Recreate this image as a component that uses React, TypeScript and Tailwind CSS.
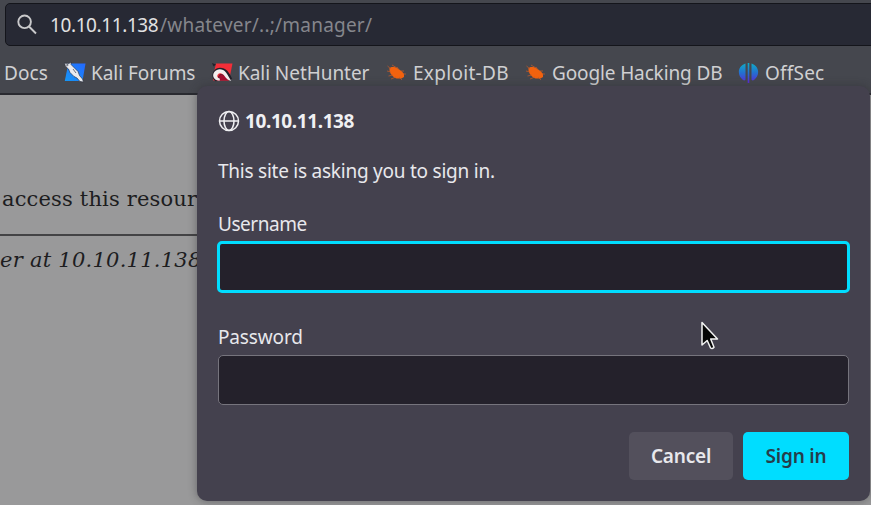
import type { ReactNode } from "react";

function KaliForumsIcon() {
  return (
    <svg width="22" height="22" viewBox="0 0 22 22" className="block">
      <defs>
        <linearGradient id="forums" x1="0" y1="1" x2="1" y2="0">
          <stop offset="0" stopColor="#1597f5" />
          <stop offset="1" stopColor="#2468ff" />
        </linearGradient>
      </defs>
      <path d="M4.500 1.500H21.500L18.500 19H.8L3 8Z" fill="url(#forums)" />
      <path d="M.5 1l4.500.5 2-1.500 0 2.500 3.500 3.500 3.500 3.500 1.500 4 3 3.500 1 3-3.500-.5-3-3.500-3-1.500L8 12.500 6 10.500 4.500 7 1.500 4.500Z" fill="#e9ebf0" stroke="#252a38" strokeWidth=".6" />
      <path d="M1.500 1.500l3 1.500M2 4l2-.5M9 7l3 4" stroke="#3a3d4a" strokeWidth=".7" />
    </svg>
  );
}

function NetHunterIcon() {
  return (
    <svg width="22" height="22" viewBox="0 0 22 22" className="block">
      <path d="M5 1.500H21.500L18 18.500H2L3 10Z" fill="#f42e38" />
      <path d="M5 18.500L9 12l5 1 3.500 5.500Z" fill="#a70e30" />
      <path d="M1 1l4 1.500-2.500 2Z" fill="#23202a" />
      <path d="M6 18C1.500 15 2.500 8 9 7.500c5 0 7.500 3.500 10.500 10" fill="none" stroke="#23202a" strokeWidth="3.600" />
      <path d="M5.500 17.500C1.500 14.500 3.500 8.500 9 8.200c5-.2 7 4.300 10.500 9.300-3.500-1.500-5.500-5-9-5-3 .2-4 2.500-1.500 4.500" fill="none" stroke="#23202a" strokeWidth=".5" />
      <path d="M8.500 18.700C2 18.500.8 13 3.500 9.800 6.500 6 12 6.500 15 10.500c2 2.500 3 5 5.200 8.500-3-.8-5-2.500-6.700-5-2-2.800-5-3.500-6.700-1.500-1.300 1.800-.3 3.500 2.200 4.200Z" fill="#f4eeee" />
    </svg>
  );
}

function BugIcon() {
  return (
    <svg width="22" height="20" viewBox="0 0 22 20" className="block">
      <path d="M3.500 5.500C5 3.500 9 3.500 12.500 6l3.500 2.500 2 2.500 0 3-2.500 1.500-5 0C7 14.500 3 10 3.500 5.500Z" fill="#f2620e" />
      <path d="M5 6L1.500 3M5 9L1 8M7 12l-4.500 1M10 14l-5 2M13 14l3 3M11 5L6 2M13 7l-2-3M15 8h3M17 11h3" fill="none" stroke="#c95c26" strokeWidth=".7" />
    </svg>
  );
}

function OffSecIcon() {
  return (
    <svg width="21" height="22" viewBox="0 0 21 22" className="block">
      <defs>
        <linearGradient id="offsec" x1="0" y1="0" x2="0" y2="22" gradientUnits="userSpaceOnUse">
          <stop offset="0" stopColor="#0cb4c4" />
          <stop offset=".5" stopColor="#246fd0" />
          <stop offset="1" stopColor="#6320dd" />
        </linearGradient>
      </defs>
      <path d="M7.500 1.500V17.500Q6.500 19 5 18C-.7 14 -1.100 4.500 7.500 1.500ZM9.700 1h1.600v20h-1.600ZM13.500 1.500V17.500Q14.500 19 16 18C21.700 14 22.100 4.500 13.500 1.500Z" fill="url(#offsec)" />
    </svg>
  );
}

function Bookmark({ icon, children, className }: { icon?: ReactNode; children: string; className: string }) {
  return (
    <div className={`flex shrink-0 items-center whitespace-nowrap ${className}`}>
      {icon}
      <span>{children}</span>
    </div>
  );
}

export default function App() {
  return (
    <div className="relative h-[505px] w-[871px] overflow-hidden bg-[#99999a] font-['Noto_Sans',sans-serif] text-[#d0d0d2]">
      <header className="h-[95px] border-b-2 border-[#292a30] bg-[#45474e] pt-[3px]">
        <div className="ml-[5px] flex h-[43px] w-[880px] items-center rounded-[5px] border border-[#14151b] bg-[#272934] pl-[11px]">
          <svg width="20" height="21" viewBox="0 0 20 21" fill="none" stroke="#c9c9cb" strokeWidth="1.900">
            <circle cx="7.600" cy="7.800" r="6.300" />
            <path d="M12 12.500l7 7" />
          </svg>
          <div className="ml-[13px] whitespace-nowrap text-[19px] leading-[26px] text-[#85868c]">
            <span className="inline-block w-[110px] tracking-[-0.4px] text-[#e1e1e2]">10.10.11.138</span>
            <span className="tracking-[0.22px]">/whatever/..;/manager/</span>
          </div>
        </div>
        <nav className="flex h-[46px] items-center pl-1 pt-2 text-[19px] leading-[26px]">
          <Bookmark className="w-[60px] tracking-[0.05px]">Docs</Bookmark>
          <Bookmark className="w-[147px] gap-[5px] tracking-[-0.05px]" icon={<KaliForumsIcon />}>Kali Forums</Bookmark>
          <Bookmark className="w-[175px] gap-[5px] tracking-[-0.06px]" icon={<NetHunterIcon />}>Kali NetHunter</Bookmark>
          <Bookmark className="w-[139px] gap-[5px] tracking-[0.3px]" icon={<BugIcon />}>Exploit-DB</Bookmark>
          <Bookmark className="w-[213px] gap-[5px] tracking-[-0.13px]" icon={<BugIcon />}>Google Hacking DB</Bookmark>
          <Bookmark className="gap-[6px] tracking-[0.2px]" icon={<OffSecIcon />}>OffSec</Bookmark>
        </nav>
      </header>

      <main className="w-[240px] overflow-hidden whitespace-nowrap pt-[89px] font-['DejaVu_Serif',serif] text-[21px] leading-[30px] text-[#1d1d1f]">
        <p className="pl-[2px] tracking-[0.16px]">access this resource</p>
        <hr className="mt-5 border-t-2 border-[#434345]" />
        <p className="mt-[9px] italic tracking-[0.25px]">er at 10.10.11.138</p>
      </main>

      <section className="absolute left-[197px] top-[86px] h-[415px] w-[673px] rounded-[10px] bg-[#44414e] px-[21px] pt-[22px] text-[#e8e8ec] shadow-[0_0_8px_rgba(40,40,45,0.45)]">
        <div className="flex h-[26px] items-center gap-[5px]">
          <svg width="22" height="22" viewBox="0 0 22 22" fill="none" stroke="#f0f0f3" strokeWidth="1.500">
            <circle cx="11" cy="11" r="9.500" />
            <ellipse cx="11" cy="11" rx="5" ry="9.500" />
            <path d="M1.500 11h19" />
          </svg>
          <h1 className="text-[19px] font-bold leading-[26px] tracking-[-0.4px] text-[#f0f0f3]">10.10.11.138</h1>
        </div>
        <p className="mt-[24px] whitespace-nowrap text-[19px] leading-[26px] tracking-[-0.24px]">This site is asking you to sign in.</p>
        <label className="mt-[27px] block text-[19px] leading-[26px] tracking-[-0.45px]">
          Username
          <input className="-ml-px mt-[4px] block h-[52px] w-[633px] rounded-[5px] border-[3px] border-[#00ddff] bg-[#24212b] outline-none" />
        </label>
        <label className="mt-[31px] block text-[19px] leading-[26px] tracking-[-0.15px]">
          Password
          <input type="password" className="mt-[5px] block h-[50px] w-[631px] rounded-[5px] border border-[#76747d] bg-[#24212b] outline-none" />
        </label>
        <div className="mt-[27px] flex justify-end gap-[10px] text-[19px] font-semibold">
          <button className="h-[48px] w-[104px] rounded-[5px] bg-[#53505c] tracking-[-0.2px]">Cancel</button>
          <button className="h-[48px] w-[106px] rounded-[5px] bg-[#00ddff] tracking-[-0.2px] text-[#263d4b]">Sign in</button>
        </div>
      </section>

      <svg className="absolute left-[700px] top-[320px]" width="20" height="32" viewBox="0 0 20 32">
        <path d="M2 2.500V25l5.200-4.500 3.400 7.500q1.700 1.200 3.400-.8L10.700 19H17.500Z" fill="#050505" stroke="#f3f3f3" strokeWidth="1.500" strokeLinejoin="round" />
      </svg>
    </div>
  );
}
